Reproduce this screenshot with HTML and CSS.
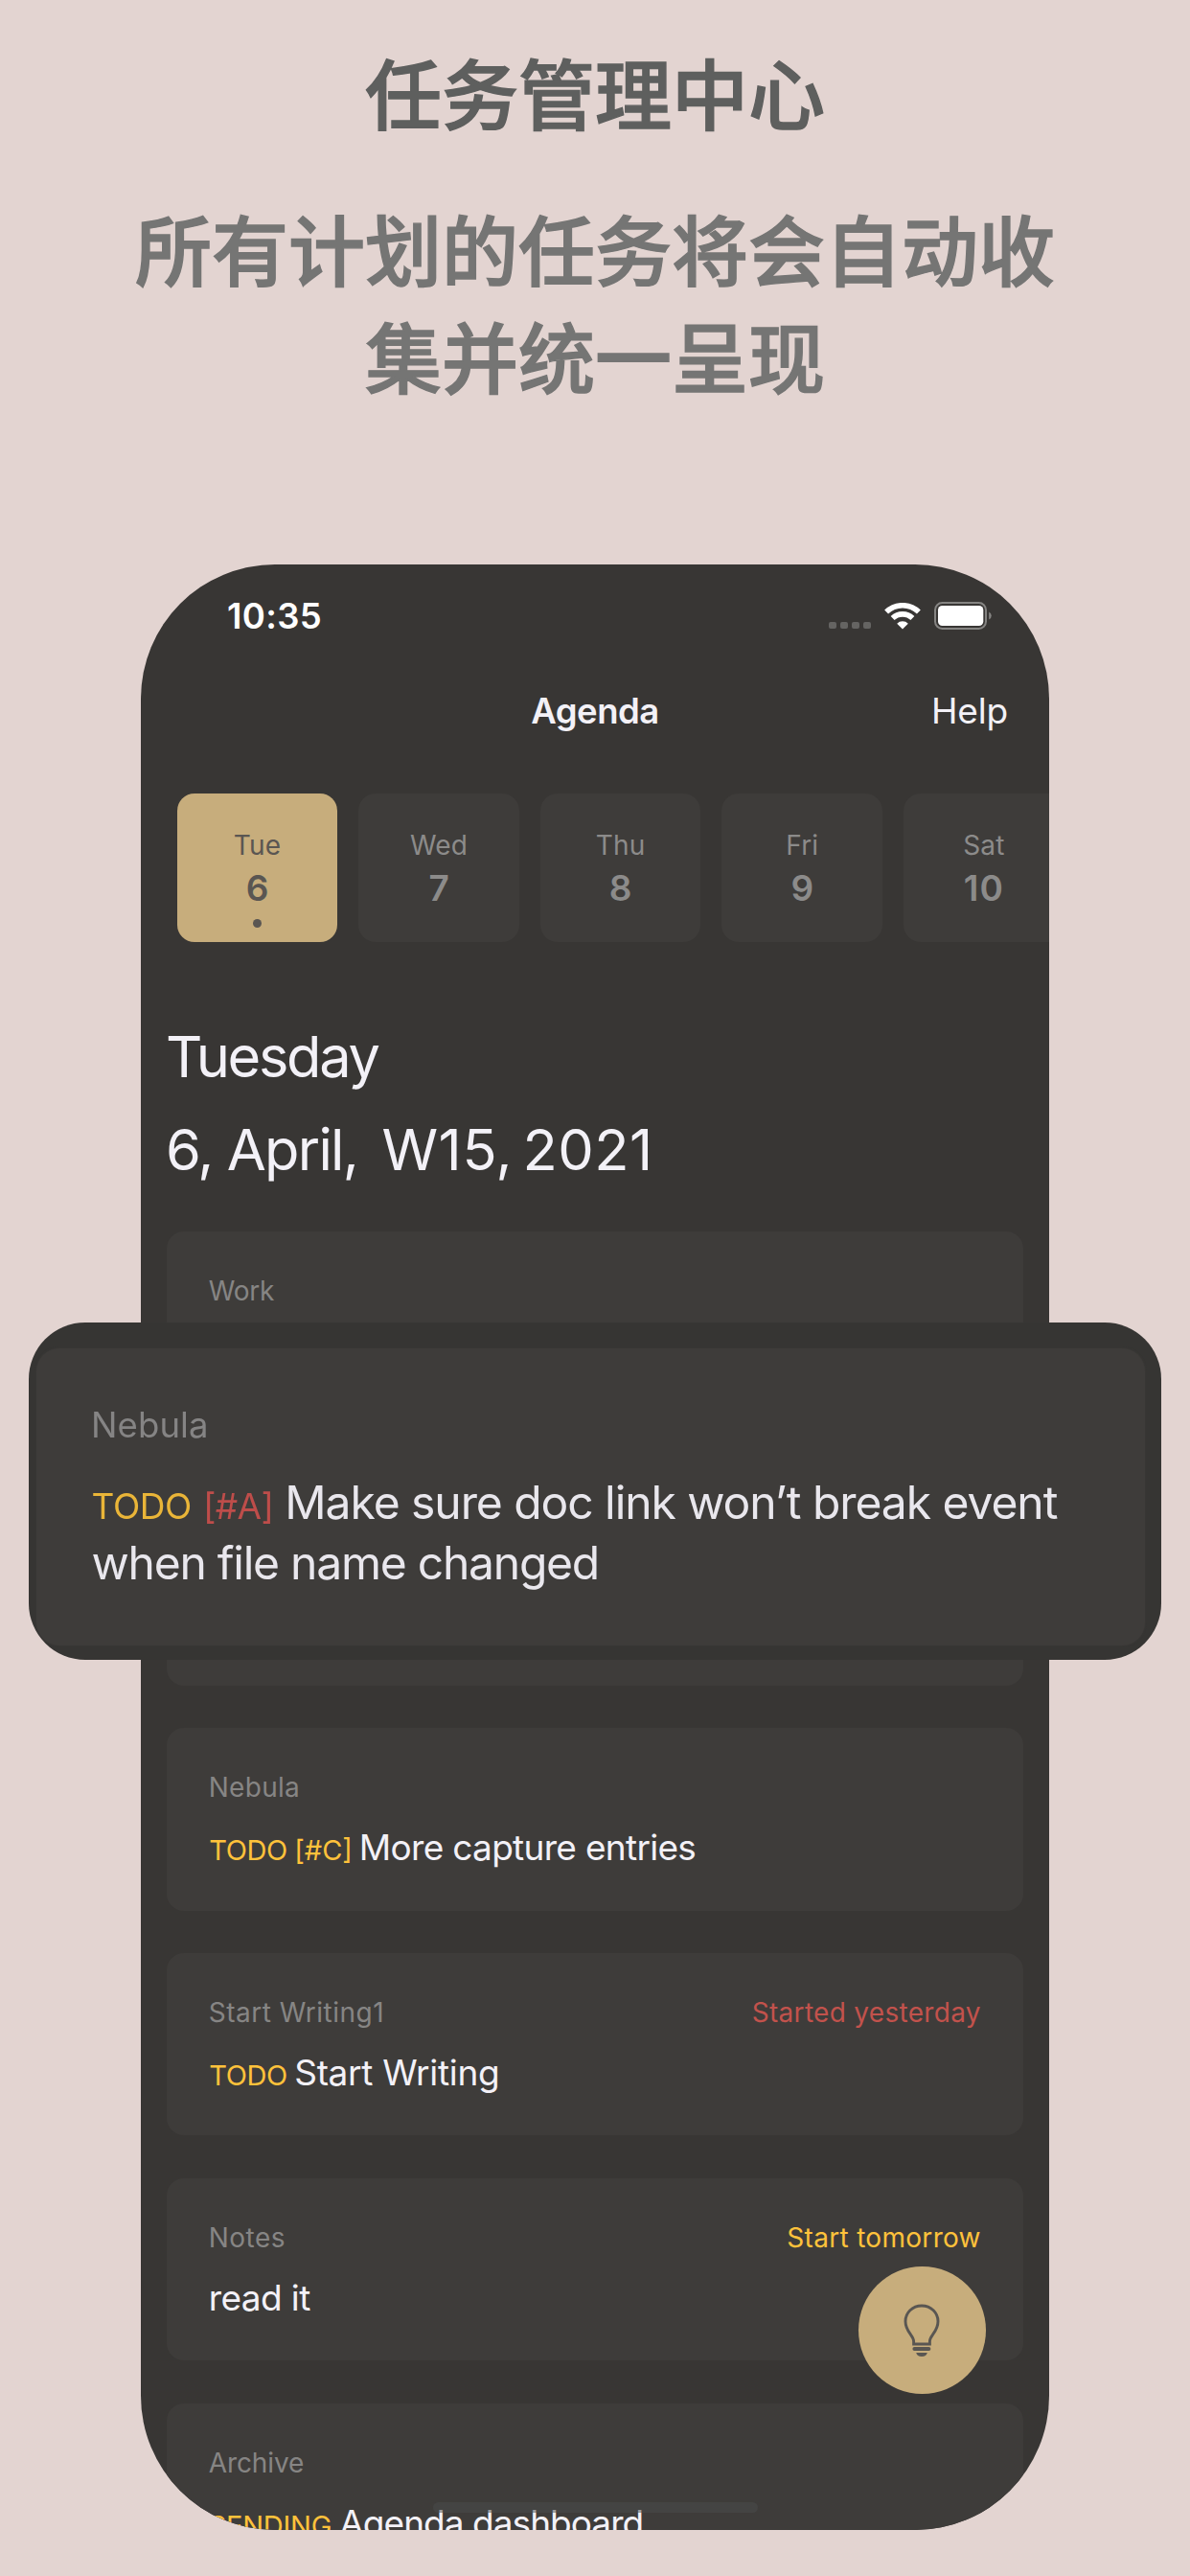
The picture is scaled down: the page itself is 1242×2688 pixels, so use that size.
FILE: index.html
```
<!DOCTYPE html>
<html lang="zh-CN">
<head>
<meta charset="utf-8">
<title>任务管理中心</title>
<link rel="stylesheet" href="styles.css">
</head>
<body>
<main class="page">
  <header class="intro">
    <h1 class="intro-title">任务管理中心</h1>
    <p class="intro-text">所有计划的任务将会自动收<br>集并统一呈现</p>
  </header>

  <section class="phone" lang="en">
    <div class="status">
      <span class="time">10:35</span>
      <div class="status-icons">
        <div class="dots"><i></i><i></i><i></i><i></i></div>
        <svg class="wifi" width="38" height="28" viewBox="0 0 38 28">
          <g fill="none" stroke="#fff" stroke-width="5.6">
            <path d="M2.1 9.6A24.2 24.2 0 0 1 35.9 9.6"/>
            <path d="M8.6 16.1A15 15 0 0 1 29.4 16.1"/>
          </g>
          <path d="M19 27.6L13.2 21.7A8.3 8.3 0 0 1 24.8 21.7Z" fill="#fff"/>
        </svg>
        <svg class="battery" width="61" height="29" viewBox="0 0 61 29">
          <rect x="1" y="1" width="53" height="27" rx="7.5" fill="none" stroke="#858482" stroke-width="2"/>
          <rect x="4" y="4" width="47.3" height="21" rx="4.5" fill="#fff"/>
          <path d="M57.2 10.4A4.6 4.6 0 0 1 57.2 18.6Z" fill="#858482"/>
        </svg>
      </div>
    </div>

    <nav class="nav">
      <span class="nav-title">Agenda</span>
      <a class="nav-help">Help</a>
    </nav>

    <div class="days">
      <div class="day day-active"><span class="day-name">Tue</span><span class="day-num">6</span><i class="day-dot"></i></div>
      <div class="day"><span class="day-name">Wed</span><span class="day-num">7</span></div>
      <div class="day"><span class="day-name">Thu</span><span class="day-num">8</span></div>
      <div class="day"><span class="day-name">Fri</span><span class="day-num">9</span></div>
      <div class="day"><span class="day-name">Sat</span><span class="day-num ten">10</span></div>
    </div>

    <div class="date">
      <div class="weekday">Tuesday</div>
      <div class="date-line"><span class="month">6, April,</span><span class="week">W15,</span><span class="year">2021</span></div>
    </div>

    <div class="cards">
      <article class="card"><div class="card-head"><span class="tight">Work</span></div></article>
      <article class="card card-tall"></article>
      <article class="card">
        <div class="card-head"><span>Nebula</span></div>
        <div class="card-title"><span class="tag tag-todo">TODO</span><span class="tag tag-priority">[#C]</span><span class="task-a">More capture entries</span></div>
      </article>
      <article class="card">
        <div class="card-head"><span class="wide">Start Writing1</span><span class="late">Started yesterday</span></div>
        <div class="card-title"><span class="tag tag-todo">TODO</span><span class="task-b">Start Writing</span></div>
      </article>
      <article class="card">
        <div class="card-head"><span class="wide">Notes</span><span class="soon">Start tomorrow</span></div>
        <div class="card-title"><span class="task-c">read it</span></div>
      </article>
      <article class="card">
        <div class="card-head"><span class="plain">Archive</span></div>
        <div class="card-title"><span class="tag tag-pending">PENDING</span><span class="task-d">Agenda dashboard</span></div>
      </article>
    </div>

    <div class="home-bar"></div>
    <button class="fab" aria-label="Capture">
      <svg width="38" height="56" viewBox="0 0 38 56">
        <path d="M19 2C9.300 2 2 9.400 2 18.200C2 24.200 4.300 27.600 7 31.400C9.400 34.800 10.600 36.300 10.600 39V42H27.400V39C27.400 36.300 28.600 34.800 31 31.400C33.700 27.600 36 24.200 36 18.200C36 9.400 28.700 2 19 2Z" fill="none" stroke="#595652" stroke-width="2.900"/>
        <rect x="9.400" y="45" width="19" height="4" rx="2" fill="#595652"/>
        <path d="M13.200 51H24.800C24.200 53.600 22.200 55 19 55C15.800 55 13.800 53.600 13.200 51Z" fill="#595652"/>
      </svg>
    </button>
  </section>

  <aside class="callout" lang="en">
    <div class="callout-card">
      <div class="callout-head">Nebula</div>
      <div class="callout-title">
        <div class="callout-line"><span class="c-todo">TODO</span><span class="c-priority">[#A]</span><span class="c-task">Make sure doc link won’t break event</span></div>
        <div class="callout-line c-task-more">when file name changed</div>
      </div>
    </div>
  </aside>
</main>
</body>
</html>
```
FILE: styles.css
```
* { box-sizing: border-box; }

body {
  margin: 0;
  background: #e3d4d1;
  font-family: Inter, "Noto Sans CJK SC", sans-serif;
}

.page {
  position: relative;
  display: flex;
  flex-direction: column;
  align-items: center;
  width: 1242px;
  height: 2688px;
  overflow: hidden;
}

/* Headline */
.intro {
  display: flex;
  flex-direction: column;
  gap: 51px;
  padding-top: 37.500px;
  height: 589px;
  text-align: center;
  font-family: "Noto Sans CJK SC", sans-serif;
  font-size: 80px;
  font-weight: 500;
  line-height: 112px;
  -webkit-text-stroke: 1.400px currentColor;
}
.intro-title { margin: 0; font-size: 80px; font-weight: 500; color: #5e5f5e; }
.intro-text { margin: 0; color: #757574; }

/* Phone */
.phone {
  position: relative;
  width: 948px;
  height: 2051px;
  padding-top: 34px;
  border-radius: 140px;
  background: #383634;
  overflow: hidden;
  color: #f3f1f7;
}

.status {
  display: flex;
  justify-content: space-between;
  height: 40px;
  padding: 0 59px 0 90px;
  color: #fff;
}
.time { font-size: 36.5px; font-weight: 600; line-height: 40px; letter-spacing: 0.33px; }
.status-icons { display: flex; align-items: flex-start; padding-top: 5px; }
.dots { display: flex; gap: 4px; padding: 21px 14px 0 0; }
.dots i { width: 8px; height: 7px; border-radius: 2px; background: #656462; }
.wifi { margin: 1px 14px 0 0; }

.nav {
  display: grid;
  grid-template-columns: 1fr auto 1fr;
  margin-top: 57px;
  padding-right: 43px;
  padding-left: 43px;
  line-height: 44px;
}
.nav-title { grid-column: 2; font-size: 36.5px; font-weight: 600; letter-spacing: -0.5px; }
.nav-help { justify-self: end; font-size: 37px; letter-spacing: -0.18px; }

.days { display: flex; gap: 22px; margin: 64px 0 0 37.700px; }
.day {
  display: flex;
  flex: none;
  flex-direction: column;
  align-items: center;
  width: 167.600px;
  height: 155.300px;
  padding-top: 37px;
  border-radius: 18px;
  background: #3e3c3a;
  color: #8c8b8a;
}
.day-active { background: #c7ad7c; color: #5a5652; }
.day-name { font-size: 28px; line-height: 34px; letter-spacing: 0.15px; }
.day-num { margin-top: 6px; font-size: 37px; font-weight: 600; line-height: 44px; }
.ten { letter-spacing: 1px; }
.day-dot { width: 9px; height: 9px; margin-top: 10px; border-radius: 50%; background: currentColor; }

.date { margin: 71px 0 0 26px; font-size: 59.500px; line-height: 97px; }
.weekday { letter-spacing: -2.300px; }
.date-line { display: flex; }
.month { width: 225.400px; letter-spacing: -1.700px; white-space: pre; }
.week { width: 147px; letter-spacing: 0.6px; }
.year { letter-spacing: 0.5px; }

.cards { display: flex; flex-direction: column; gap: 44.500px; margin: 36.500px 26.700px 0; }
.card {
  flex: none;
  height: 190.400px;
  padding: 44px 44.500px 0 44px;
  border-radius: 18px;
  background: #3e3c3a;
}
.card-tall { height: 239px; }
.card-head {
  display: flex;
  justify-content: space-between;
  font-size: 28px;
  line-height: 36px;
  letter-spacing: 0.3px;
  color: #868584;
}
.tight { letter-spacing: -0.2px; }
.plain { letter-spacing: -0.1px; }
.wide { letter-spacing: 0.5px; }
.late { color: #c2524c; }
.soon { color: #ffc23b; }
.card-title {
  display: flex;
  align-items: baseline;
  margin-top: 21px;
  font-size: 37px;
  line-height: 48px;
  white-space: nowrap;
}
.tag { font-size: 29px; letter-spacing: -0.4px; color: #ffc23b; }
.tag-todo { width: 89px; margin-left: 0.5px; }
.tag-priority { width: 67.600px; letter-spacing: 0; }
.tag-pending { width: 136.500px; letter-spacing: -0.23px; }
.task-a { letter-spacing: -0.69px; }
.task-b { letter-spacing: -0.3px; }
.task-c { letter-spacing: -0.59px; }
.task-d { letter-spacing: -0.95px; }

.home-bar {
  position: absolute;
  left: 305px;
  top: 2022px;
  width: 339px;
  height: 11px;
  border-radius: 6px;
  background: rgba(74, 76, 76, 0.5);
}

.fab {
  position: absolute;
  left: 749px;
  top: 1776px;
  display: flex;
  align-items: center;
  justify-content: center;
  width: 133px;
  height: 133px;
  padding: 0 1px 0 0;
  border: 0;
  border-radius: 50%;
  background: #c7ad7c;
}

/* Enlarged task laid over the phone */
.callout {
  position: absolute;
  left: 30px;
  top: 1380px;
  width: 1181.500px;
  height: 351.700px;
  padding: 27px 16.500px 15px 8px;
  border-radius: 59px;
  background: #363533;
}
.callout-card {
  height: 309.700px;
  padding: 56.700px 0 0 57px;
  border-radius: 24px;
  background: #3e3c3a;
  box-shadow: 0 0 2px #3e3c3a;
  color: #e9e7ed;
}
.callout-head { font-size: 36.500px; line-height: 46px; letter-spacing: 0.1px; color: #858484; filter: blur(0.6px); }
.callout-title { margin: 26.300px 0 0 0.5px; font-size: 48px; line-height: 63px; filter: blur(0.6px); }
.callout-line { display: flex; align-items: baseline; height: 63px; white-space: nowrap; }
.c-todo { width: 116.500px; font-size: 37px; letter-spacing: -0.4px; color: #eab538; }
.c-priority { width: 85.300px; font-size: 37px; letter-spacing: -0.69px; color: #be4d4a; }
.c-task { letter-spacing: -1.060px; }
.c-task-more { letter-spacing: -1.240px; }
```
